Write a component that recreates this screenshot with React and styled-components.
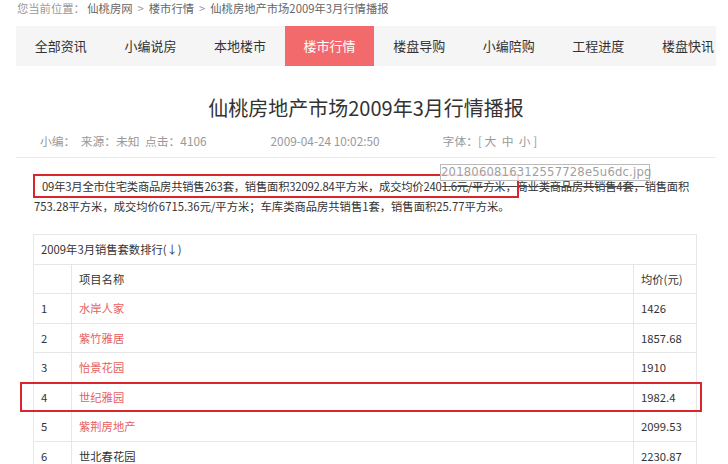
import React from 'react'
import styled, { createGlobalStyle } from 'styled-components'

const GlobalStyle = createGlobalStyle`
  body {
    margin: 0;
    background: #fff;
    font-family: "Noto Sans CJK SC", "Noto Sans", sans-serif;
    color: #333;
  }
`

const Page = styled.div`
  position: relative;
  width: 700px;
  height: 464px;
  padding: 0 16px;
  overflow: hidden;
`

const Breadcrumb = styled.div`
  height: 26px;
  padding-left: 1px;
  font-size: 11.3px;
  line-height: 16px;
  color: #999;

  a {
    color: #666;
    text-decoration: none;
  }

  .sep {
    margin: 0 5px;
    color: #999;
  }
`

const Nav = styled.div`
  display: flex;
  height: 40px;
  background: #f5f5f5;
  overflow: hidden;
`

const NavItem = styled.div`
  flex: 0 0 89.6px;
  text-align: center;
  line-height: 40px;
  font-size: 13px;
  color: ${({ $active }) => ($active ? '#fff' : '#333')};
  background: ${({ $active }) => ($active ? '#f26a6b' : 'transparent')};
`

const Title = styled.h1`
  margin: 27px 0 0;
  font-size: 20px;
  font-weight: normal;
  line-height: 30px;
  text-align: center;
  color: #333;
`

const Meta = styled.div`
  display: flex;
  margin-top: 10px;
  padding: 0 24px 8px;
  font-size: 11.8px;
  line-height: 16px;
  color: #999;
  border-bottom: 1px solid #ebebeb;

  span {
    white-space: pre;
  }
`

const MetaItem = styled.span`
  margin-left: ${({ $gap }) => $gap || 0}px;
`

const Para = styled.p`
  margin: 18px 0 0;
  padding-left: 18px;
  font-size: 11.3px;
  line-height: 20px;
  color: #333;
  white-space: nowrap;

  .first {
    padding-left: 8px;
    letter-spacing: -0.2px;
  }

  .strike {
    text-decoration: line-through;
    text-decoration-color: #444;
  }
`

const Table = styled.table`
  margin: 18px 0 0 17px;
  width: 664px;
  border-collapse: collapse;
  font-size: 11.3px;
  color: #333;

  td {
    height: 28.5px;
    padding: 0 7px;
    border: 1px solid #e6e6e6;
  }

  td.no {
    width: 23px;
  }

  td.price {
    width: 48px;
  }
`

const NameCell = styled.td`
  color: ${({ $link }) => ($link ? '#e8605f' : '#333')};
`

const Highlight = styled.div`
  position: absolute;
  box-sizing: border-box;
  border: 2px solid #d8262c;
  left: ${({ $x }) => $x}px;
  top: ${({ $y }) => $y}px;
  width: ${({ $w }) => $w}px;
  height: ${({ $h }) => $h}px;
`

const Tip = styled.div`
  position: absolute;
  left: 440px;
  top: 164px;
  width: 208px;
  height: 15px;
  border: 1px solid #bbb;
  background: rgba(255, 255, 255, 0.85);
  color: #a0a0a0;
  font-family: "DejaVu Sans", sans-serif;
  font-size: 11.6px;
  line-height: 15px;
  text-align: center;
  letter-spacing: 0.2px;
`

const navItems = ['全部资讯', '小编说房', '本地楼市', '楼市行情', '楼盘导购', '小编陪购', '工程进度', '楼盘快讯']

const rows = [
  { no: 1, name: '水岸人家', price: '1426', link: true },
  { no: 2, name: '紫竹雅居', price: '1857.68', link: true },
  { no: 3, name: '怡景花园', price: '1910', link: true },
  { no: 4, name: '世纪雅园', price: '1982.4', link: true },
  { no: 5, name: '紫荆房地产', price: '2099.53', link: true },
  { no: 6, name: '世北春花园', price: '2230.87', link: false },
]

export default function App() {
  return (
    <>
      <GlobalStyle />
      <Page>
        <Breadcrumb>
          您当前位置： <a href="#">仙桃房网</a>
          <span className="sep">&gt;</span>
          <a href="#">楼市行情</a>
          <span className="sep">&gt;</span>
          <a href="#">仙桃房地产市场2009年3月行情播报</a>
        </Breadcrumb>

        <Nav>
          {navItems.map((item) => (
            <NavItem key={item} $active={item === '楼市行情'}>
              {item}
            </NavItem>
          ))}
        </Nav>

        <Title>仙桃房地产市场2009年3月行情播报</Title>

        <Meta>
          <MetaItem>小编：  来源：未知  点击：4106</MetaItem>
          <MetaItem $gap={64}>2009-04-24 10:02:50</MetaItem>
          <MetaItem $gap={63}>字体：[ 大  中  小 ]</MetaItem>
        </Meta>

        <Para>
          <span className="first">
            09年3月全市住宅类商品房共销售263套，销售面积32092.84平方米，成交均价240
            <span className="strike">1.6元/平方米，商业类商品房共销售4套，</span>
            销售面积
          </span>
          <br />
          753.28平方米，成交均价6715.36元/平方米；车库类商品房共销售1套，销售面积25.77平方米。
        </Para>

        <Table>
          <tbody>
            <tr>
              <td colSpan={3}>2009年3月销售套数排行(↓)</td>
            </tr>
            <tr>
              <td className="no"></td>
              <td>项目名称</td>
              <td className="price">均价(元)</td>
            </tr>
            {rows.map((r) => (
              <tr key={r.no}>
                <td className="no">{r.no}</td>
                <NameCell $link={r.link}>{r.name}</NameCell>
                <td className="price">{r.price}</td>
              </tr>
            ))}
          </tbody>
        </Table>

        <Highlight $x={33} $y={174} $w={486} $h={24} />
        <Highlight $x={20} $y={382} $w={682} $h={30} />
        <Tip>2018060816312557728e5u6dc.jpg</Tip>
      </Page>
    </>
  )
}
